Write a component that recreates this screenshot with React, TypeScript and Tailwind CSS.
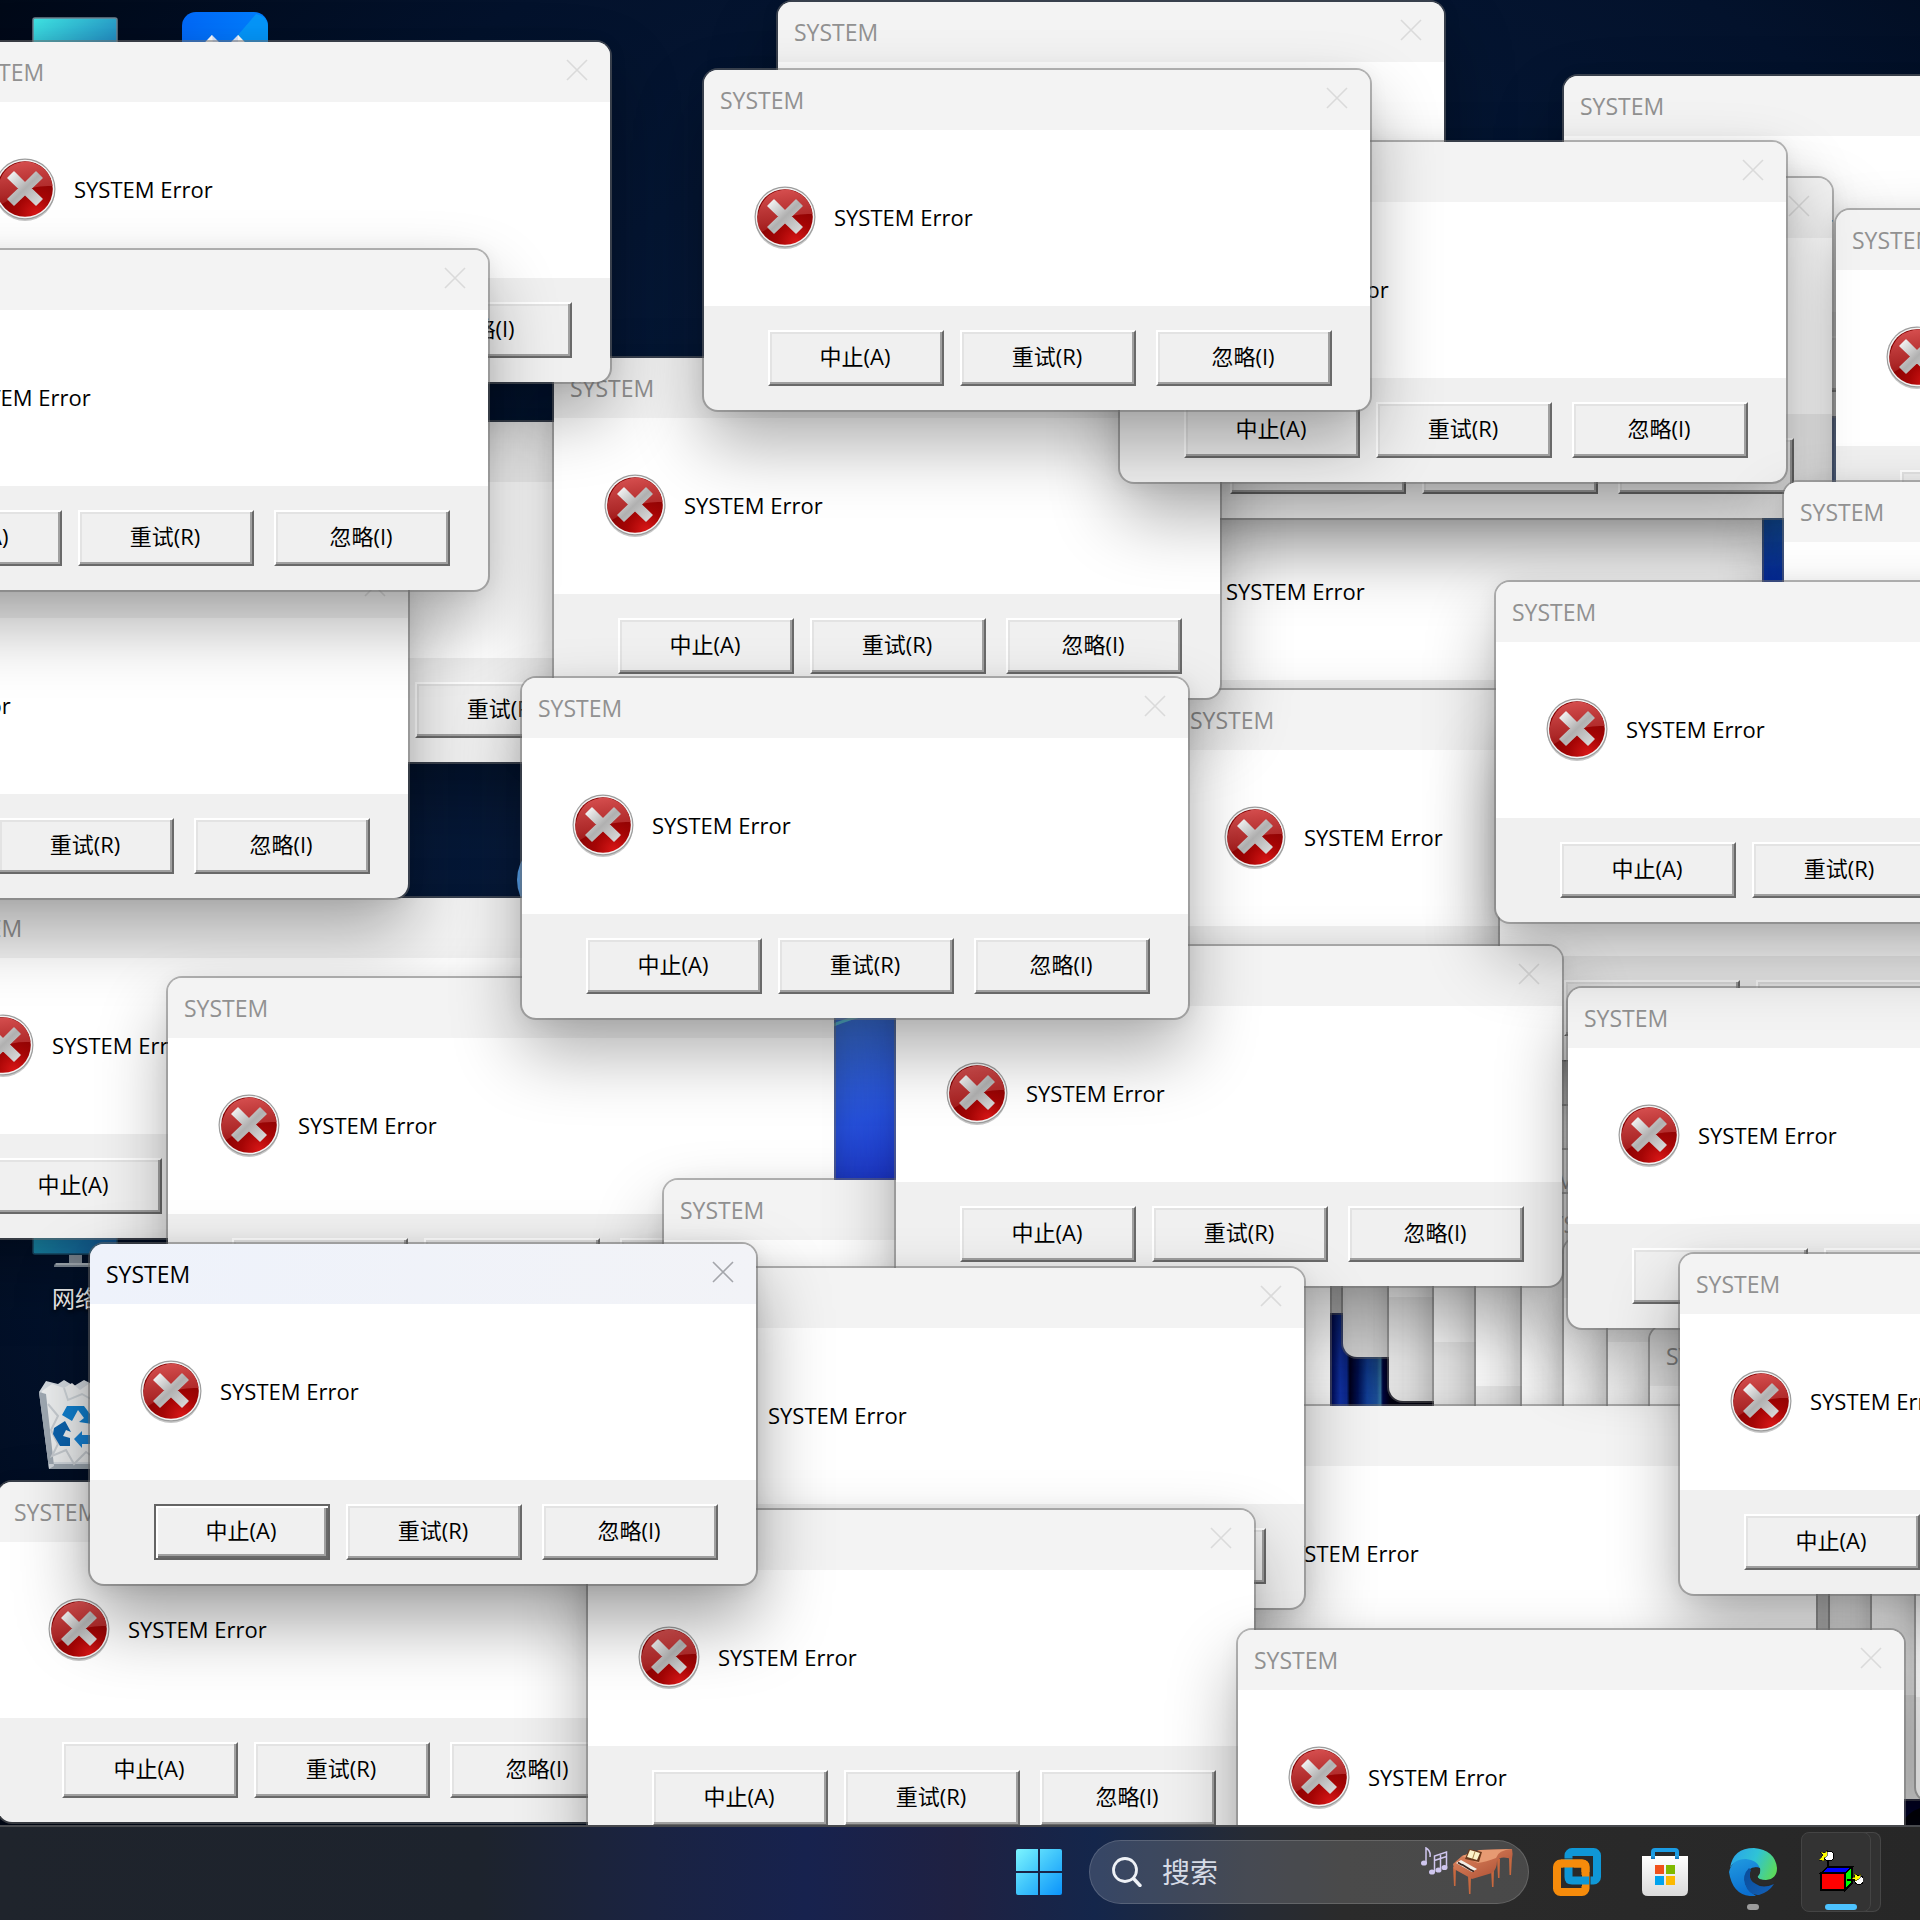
import React from "react";

const FONT = "font-['Open_Sans','Noto_Sans_CJK_SC',sans-serif]";

type Spot = { x: number; y: number };

/* Window positions from back to front; the last one has the focus. */
const WINDOWS: Spot[] = [
  { x: 1298, y: 972 },
  { x: 1342, y: 1016 },
  { x: 1388, y: 1060 },
  { x: 1433, y: 1105 },
  { x: 1475, y: 1149 },
  { x: 1521, y: 1193 },
  { x: 1563, y: 1237 },
  { x: 1607, y: 1281 },
  { x: 1649, y: 1325 },
  { x: 1693, y: 1369 },
  { x: 1739, y: 1413 },
  { x: 1785, y: 1414 },
  { x: 1829, y: 1414 },
  { x: 1871, y: 1458 },
  { x: 1915, y: 1460 },
  { x: 1563, y: 75 },
  { x: 777, y: 1 },
  { x: 1095, y: 443 },
  { x: 1173, y: 689 },
  { x: 1499, y: 719 },
  { x: 158, y: 421 },
  { x: 1165, y: 177 },
  { x: 553, y: 357 },
  { x: 1835, y: 209 },
  { x: 1119, y: 141 },
  { x: 1783, y: 481 },
  { x: -79, y: 897 },
  { x: -259, y: 557 },
  { x: 167, y: 977 },
  { x: 663, y: 1179 },
  { x: 1149, y: 1405 },
  { x: -3, y: 1481 },
  { x: -57, y: 41 },
  { x: -179, y: 249 },
  { x: 703, y: 69 },
  { x: 895, y: 945 },
  { x: 521, y: 677 },
  { x: 1567, y: 987 },
  { x: 1495, y: 581 },
  { x: 637, y: 1267 },
  { x: 1679, y: 1253 },
  { x: 587, y: 1509 },
  { x: 1237, y: 1629 },
  { x: 89, y: 1243 },
];

function ErrorIcon() {
  return (
    <svg viewBox="0 0 62 64" className="h-16 w-[62px] shrink-0" aria-hidden="true">
      <ellipse cx="31" cy="33" rx="30" ry="30" fill="#000" opacity="0.22" />
      <circle cx="31" cy="31" r="30.500" fill="#9c9c9c" />
      <circle cx="31" cy="31" r="29.300" fill="#f4f4f4" />
      <circle cx="31" cy="31" r="27.800" fill="url(#err-red)" />
      <path d="M3.500 35 Q4 43 8 46 Q20 39 27 34 Q40 27 58.500 28 Q56 8 34 3.500 Q8 4 3.500 31Z" fill="url(#err-gloss)" />
      <path
        d="M20 14 L31 25 L42 14 L48 20 L37 30.500 L48 41 L42 47 L31 36.500 L20 47 L14 41 L25 30.500 L14 20Z"
        fill="url(#err-x)"
        stroke="url(#err-x)"
        strokeWidth="1.500"
        strokeLinejoin="round"
      />
    </svg>
  );
}

function SharedGradients() {
  return (
    <svg className="absolute h-0 w-0" aria-hidden="true">
      <defs>
        <radialGradient id="err-red" cx="0.7" cy="0.95" r="0.75">
          <stop offset="0" stopColor="#d81717" />
          <stop offset="0.45" stopColor="#a50505" />
          <stop offset="1" stopColor="#840202" />
        </radialGradient>
        <linearGradient id="err-gloss" x1="0.4" y1="0" x2="0.6" y2="1">
          <stop offset="0" stopColor="#d64f4f" />
          <stop offset="0.7" stopColor="#b43030" stopOpacity="0.85" />
          <stop offset="1" stopColor="#a82020" stopOpacity="0.6" />
        </linearGradient>
        <linearGradient id="err-x" x1="0" y1="0" x2="1" y2="1">
          <stop offset="0" stopColor="#fbfbfb" />
          <stop offset="0.5" stopColor="#b0b0b0" />
          <stop offset="1" stopColor="#dedede" />
        </linearGradient>
      </defs>
    </svg>
  );
}

function PushButton({ label, focused = false }: { label: string; focused?: boolean }) {
  const frame = focused
    ? "border-2 border-[#646464] shadow-[inset_2px_2px_0_#fff,inset_-2px_-2px_0_#696969,inset_-4px_-4px_0_#a0a0a0]"
    : "border-2 border-t-white border-r-[#696969] border-b-[#696969] border-l-white shadow-[inset_-2px_-2px_0_#a0a0a0,inset_2px_2px_0_#e3e3e3]";
  return (
    <button
      type="button"
      className={`flex h-14 w-44 items-center justify-center bg-[#f0f0f0] pr-0.5 pb-1 text-[22px] leading-7 text-black ${frame}`}
    >
      {label}
    </button>
  );
}

function ErrorWindow({ x, y, active }: Spot & { active: boolean }) {
  const shadow = active
    ? "shadow-[0_0_0_2px_rgba(100,100,100,0.5),0_36px_72px_rgba(0,0,0,0.38),0_2px_20px_rgba(0,0,0,0.1)]"
    : "shadow-[0_0_0_2px_rgba(110,110,110,0.5),0_34px_70px_rgba(0,0,0,0.32),0_2px_20px_rgba(0,0,0,0.07)]";
  return (
    <section
      aria-label="SYSTEM"
      className={`absolute m-px w-[666px] overflow-hidden rounded-[14px] bg-[#f0f0f0] ${shadow}`}
      style={{ left: x, top: y }}
    >
      <header
        className={`flex h-[60px] items-center justify-between pr-[22px] pl-4 ${
          active ? "bg-linear-to-r from-[#eef2fb] to-[#f2f3f7] text-black" : "bg-[#f3f3f3] text-[#919191]"
        }`}
      >
        <h2 className="text-[23px] leading-8">SYSTEM</h2>
        <button type="button" aria-label="Close" className={`pb-1 ${active ? "text-[#a4a6ab]" : "text-[#dadada]"}`}>
          <svg viewBox="0 0 22 22" className="size-[22px]" fill="none" stroke="currentColor" strokeWidth="1.600">
            <path d="M1 1 L21 21 M21 1 L1 21" />
          </svg>
        </button>
      </header>
      <div className="flex h-44 items-center gap-[18px] bg-white pl-[50px]">
        <ErrorIcon />
        <p className="pb-0.5 text-[22px] leading-8 text-black">SYSTEM Error</p>
      </div>
      <footer className="flex h-[104px] items-start pt-6 pl-16">
        <PushButton label="中止(A)" focused={active} />
        <div className="ml-4">
          <PushButton label="重试(R)" />
        </div>
        <div className="ml-5">
          <PushButton label="忽略(I)" />
        </div>
      </footer>
    </section>
  );
}

function Wallpaper() {
  return (
    <svg
      className="absolute inset-0 h-full w-full"
      viewBox="0 0 1920 1825"
      preserveAspectRatio="xMidYMid slice"
      aria-hidden="true"
    >
      <defs>
        <radialGradient id="wp-bg" cx="0.58" cy="0.5" r="0.78">
          <stop offset="0" stopColor="#0c2756" />
          <stop offset="0.4" stopColor="#071a3a" />
          <stop offset="0.75" stopColor="#03122c" />
          <stop offset="1" stopColor="#000816" />
        </radialGradient>
        <linearGradient id="wp-strip" gradientUnits="userSpaceOnUse" x1="835" y1="1020" x2="895" y2="1180">
          <stop offset="0" stopColor="#3f78e2" />
          <stop offset="0.6" stopColor="#2b5af4" />
          <stop offset="1" stopColor="#1f3ad8" />
        </linearGradient>
        <linearGradient id="wp-right" gradientUnits="userSpaceOnUse" x1="0" y1="385" x2="0" y2="590">
          <stop offset="0" stopColor="#4566b4" />
          <stop offset="0.45" stopColor="#3560b4" />
          <stop offset="0.65" stopColor="#1c68cc" />
          <stop offset="1" stopColor="#0a38d8" />
        </linearGradient>
        <linearGradient id="wp-fold" gradientUnits="userSpaceOnUse" x1="1330" y1="0" x2="1390" y2="0">
          <stop offset="0" stopColor="#020a66" />
          <stop offset="0.17" stopColor="#1a44d8" />
          <stop offset="0.28" stopColor="#1538b8" />
          <stop offset="0.33" stopColor="#010526" />
          <stop offset="0.46" stopColor="#06186a" />
          <stop offset="0.62" stopColor="#1c56c8" />
          <stop offset="0.78" stopColor="#2a6ccc" />
          <stop offset="0.84" stopColor="#48a0dc" />
          <stop offset="0.88" stopColor="#041060" />
          <stop offset="1" stopColor="#01041c" />
        </linearGradient>
      </defs>
      <rect width="1920" height="1825" fill="url(#wp-bg)" />
      <path d="M760 1060 Q840 990 1000 980 L1200 1000 V1260 H760Z" fill="url(#wp-strip)" />
      <path d="M790 1050 Q822 1026 860 1016" fill="none" stroke="#5fc6e4" strokeWidth="3" />
      <path d="M1700 360 H1850 V620 H1700Z" fill="url(#wp-right)" />
      <path d="M1322 1290 H1450 V1420 H1322Z" fill="url(#wp-fold)" />
      <path d="M1880 1790 H1920 V1825 H1880Z" fill="#010a4a" />
      <path d="M1900 1825 Q1908 1812 1920 1808 V1825Z" fill="#000414" />
    </svg>
  );
}

function DesktopIcons() {
  return (
    <>
      <svg className="absolute top-4 left-8 h-24 w-[86px]" viewBox="0 0 86 96" aria-hidden="true">
        <defs>
          <linearGradient id="pc" x1="0" y1="0" x2="1" y2="1">
            <stop offset="0" stopColor="#3fe6e4" />
            <stop offset="1" stopColor="#1664b4" />
          </linearGradient>
        </defs>
        <rect x="1" y="2" width="84" height="62" rx="2" fill="url(#pc)" stroke="#6d8290" strokeWidth="1.500" />
      </svg>
      <svg className="absolute top-3 left-[182px] size-[86px]" viewBox="0 0 86 86" aria-hidden="true">
        <defs>
          <linearGradient id="app" x1="0" y1="0" x2="1" y2="0.3">
            <stop offset="0" stopColor="#0068f8" />
            <stop offset="1" stopColor="#0080ff" />
          </linearGradient>
        </defs>
        <rect width="86" height="86" rx="14" fill="url(#app)" />
        <path d="M74 2 Q86 4 86 16 V60 L50 30Z" fill="#0596fa" />
        <path d="M12 42 L30 23 L43 36 L56 23 L74 42Z" fill="#dbe8ff" />
        <path d="M30 23 L12 42 H32Z M56 23 V42 H74Z" fill="#fff" />
      </svg>
      <figure className="absolute top-[1188px] left-8 flex w-[86px] flex-col items-center">
        <svg className="h-20 w-[86px]" viewBox="0 0 86 80" aria-hidden="true">
          <defs>
            <linearGradient id="net" x1="0" y1="0" x2="1" y2="0">
              <stop offset="0" stopColor="#1c95b8" />
              <stop offset="1" stopColor="#1766b0" />
            </linearGradient>
          </defs>
          <rect x="1" y="4" width="84" height="62" rx="2" fill="url(#net)" stroke="#1d5270" strokeWidth="1.500" />
          <path d="M37 67 H50 V75 H64 Q66 75 66 79 H22 Q22 75 25 75 H37Z" fill="#8d99a6" />
          <path d="M24 76 H64" stroke="#b9c3cc" strokeWidth="2" />
        </svg>
        <figcaption className="mt-4 text-[23px] leading-7 text-white [text-shadow:0_2px_4px_#000]">网络</figcaption>
      </figure>
      <svg className="absolute top-[1378px] left-[38px] h-[92px] w-[76px]" viewBox="0 0 76 92" aria-hidden="true">
        <path d="M1 14 L8 3 L20 6 L26 2 L36 8 L46 2 L56 7 L66 3 L75 14 L66 91 H11Z" fill="#d5dbe1" />
        <path d="M4 13 L14 6 L26 10 L34 5 L42 12 L52 5 L62 12 L72 12 L64 84 H14Z" fill="#eef0f1" />
        <path d="M1 14 L11 91 L16 88 L8 16Z M11 86 H66 V91 H11Z" fill="#9fa9b3" />
        <path d="M10 26 L20 38 L13 52 L20 66 L14 78 L28 72 L36 86 L48 74 L60 82" fill="none" stroke="#c9ced3" strokeWidth="2" />
        <path d="M26 10 L30 22 L44 16 L58 24" fill="none" stroke="#cfd5da" strokeWidth="2" />
        <path d="M29 28 H46 L52 36 L55 33 L54 46 L41 44 L46 40 L40 32 L34 43 L24 37Z" fill="#1080d0" />
        <path d="M16 50 L27 43 L33 54 L28 52 L25 58 L32 60 V68 H22 L15 56Z" fill="#0b63ae" />
        <path d="M36 61 L44 53 V57 H54 L60 47 L65 54 L58 66 H44 V70Z" fill="#1783d6" />
      </svg>
      <svg className="absolute top-[834px] left-[517px] size-[84px]" viewBox="0 0 84 84" aria-hidden="true">
        <circle cx="42" cy="46" r="42" fill="#5aa4f0" />
      </svg>
    </>
  );
}

function StartLogo() {
  return (
    <svg viewBox="0 0 46 46" className="size-[46px]" aria-hidden="true">
      <defs>
        <linearGradient id="win" gradientUnits="userSpaceOnUse" x1="0" y1="0" x2="46" y2="46">
          <stop offset="0" stopColor="#7cf5ff" />
          <stop offset="0.5" stopColor="#3fc4fb" />
          <stop offset="1" stopColor="#0b93fb" />
        </linearGradient>
      </defs>
      <path d="M0 2 Q0 0 2 0 H22 V22 H0Z M24 0 H44 Q46 0 46 2 V22 H24Z M0 24 H22 V46 H2 Q0 46 0 44Z M24 24 H46 V44 Q46 46 44 46 H24Z" fill="url(#win)" />
    </svg>
  );
}

function PianoArt() {
  return (
    <svg viewBox="0 0 94 50" className="h-[50px] w-[94px]" aria-hidden="true">
      <defs>
        <linearGradient id="piano" x1="0" y1="0" x2="1" y2="1">
          <stop offset="0" stopColor="#e28a62" />
          <stop offset="1" stopColor="#a84a30" />
        </linearGradient>
      </defs>
      <g fill="#cfc6ee">
        <ellipse cx="4" cy="16" rx="3" ry="2.600" />
        <ellipse cx="12" cy="25" rx="3" ry="2.600" />
        <ellipse cx="18.500" cy="23" rx="3" ry="2.600" />
        <ellipse cx="24.500" cy="20.500" rx="3" ry="2.600" />
      </g>
      <path d="M6 16 V1 Q11 4 10 10 M14.500 25 V9 L26.500 5 V20 M14.500 13.500 L26.500 9.500 M20.500 22 V8" fill="none" stroke="#cfc6ee" strokeWidth="1.500" />
      <path d="M33 20 H36 L35.500 39 H34Z M48 29 H51 L50.500 47 H49Z M71 22 H74 L73.500 40 H72Z M77 12 H80 L79.500 31 H78Z M89 10 H92 L91 28 H89.500Z" fill="#c7683f" />
      <path d="M33 17 L42 9 L60 3 L92 2 Q93 6 92 12 Q80 8 77 14 Q77 22 72 26 L52 32 L34 22Z" fill="url(#piano)" />
      <path d="M42 9 L60 3 L92 2 Q78 3 76 11 Q66 15 58 16Z" fill="#e79a72" />
      <path d="M36 16 L52 25 L57 22 L41 13Z" fill="#f3efe8" />
      <path d="M38 15.500 l4 2.400 M42 17.500 l4 2.400 M46 20 l4 2.400 M50 22.500 l4 2" stroke="#3a2620" strokeWidth="1.800" />
      <path d="M45 12 L49 2 L62 5 L59 15Z" fill="#6d3a1d" />
      <path d="M47 10 L50 3 L60 6 L57 13Z" fill="#fdf3c9" />
      <path d="M55 4.500 L52.500 12" stroke="#a9854a" strokeWidth="1" />
    </svg>
  );
}

function SearchBox() {
  return (
    <label className="mr-1 ml-1.5 flex h-16 w-[440px] items-center rounded-full border border-white/15 bg-white/15 pr-3.5 pl-[22px]">
      <svg viewBox="0 0 30 30" className="size-[30px] shrink-0" fill="none" stroke="#eef1f6" strokeLinecap="round" aria-hidden="true">
        <circle cx="13" cy="13" r="11.500" strokeWidth="2.800" />
        <path d="M21.500 21.500 L28 28.500" strokeWidth="3.400" />
      </svg>
      <input
        type="text"
        aria-label="搜索"
        placeholder="搜索"
        className="ml-5 min-w-0 flex-1 bg-transparent text-[28px] leading-10 text-[#d6dbe6] outline-none placeholder:text-[#d6dbe6]"
      />
      <PianoArt />
    </label>
  );
}

function VmIcon() {
  return (
    <svg viewBox="0 0 48 48" className="size-12" fill="none" aria-hidden="true">
      <rect x="15.500" y="4" width="28.500" height="28.500" rx="3.500" stroke="#0f97d6" strokeWidth="8" />
      <rect x="4" y="15.500" width="28.500" height="28.500" rx="3.500" stroke="#2a2a2a" strokeWidth="10" />
      <rect x="4" y="15.500" width="28.500" height="28.500" rx="3.500" stroke="#f68b0b" strokeWidth="8" />
      <path d="M15.500 12 V29 Q15.500 32.500 19 32.500 H29" stroke="#2a2a2a" strokeWidth="11" />
      <path d="M15.500 11 V29 Q15.500 32.500 19 32.500 H36" stroke="#0f97d6" strokeWidth="8" />
      <path d="M8 15.500 H22" stroke="#f68b0b" strokeWidth="8" />
      <path d="M22 15.500 H29 Q32.500 15.500 32.500 19 V24" stroke="#f68b0b" strokeWidth="8" />
    </svg>
  );
}

function StoreIcon() {
  return (
    <svg viewBox="0 0 46 48" className="h-12 w-[46px]" aria-hidden="true">
      <defs>
        <linearGradient id="bag" x1="0" y1="0" x2="0" y2="1">
          <stop offset="0" stopColor="#ffffff" />
          <stop offset="1" stopColor="#dadada" />
        </linearGradient>
        <linearGradient id="handle" x1="0" y1="0" x2="0" y2="1">
          <stop offset="0" stopColor="#27aef0" />
          <stop offset="1" stopColor="#0c6fb8" />
        </linearGradient>
      </defs>
      <path d="M0 8 H46 V42 Q46 48 40 48 H6 Q0 48 0 42Z" fill="url(#bag)" />
      <path d="M11 10 V4 Q11 2 13 2 H33 Q35 2 35 4 V10" fill="none" stroke="#1b9ce4" strokeWidth="4" />
      <path d="M9 7 H13 V11 H9Z M33 7 H37 V11 H33Z" fill="url(#handle)" />
      <path d="M13 17 H22 V26 H13Z" fill="#f1511b" />
      <path d="M24 17 H33 V26 H24Z" fill="#80b900" />
      <path d="M13 28 H22 V37 H13Z" fill="#00a3ee" />
      <path d="M24 28 H33 V37 H24Z" fill="#fcb900" />
    </svg>
  );
}

function EdgeIcon() {
  return (
    <svg viewBox="0 0 48 48" className="size-12" aria-hidden="true">
      <defs>
        <linearGradient id="edge-top" x1="0" y1="0.3" x2="1" y2="0.6">
          <stop offset="0" stopColor="#2aa6e8" />
          <stop offset="0.5" stopColor="#2fc3d6" />
          <stop offset="1" stopColor="#5bd95c" />
        </linearGradient>
        <linearGradient id="edge-left" x1="0" y1="0" x2="0.3" y2="1">
          <stop offset="0" stopColor="#219be0" />
          <stop offset="1" stopColor="#0b6fd0" />
        </linearGradient>
        <linearGradient id="edge-low" x1="0" y1="0" x2="1" y2="0.8">
          <stop offset="0" stopColor="#0a4c9a" />
          <stop offset="1" stopColor="#135fb5" />
        </linearGradient>
      </defs>
      <path d="M1 20 Q4 0 25 0 Q46 2 48 20 Q48 31 37 32 Q29 32 28.500 28.500 Q31.500 26 31 22 Q28 12 16 12 Q4 13 1 20Z" fill="url(#edge-top)" />
      <path d="M0 24 Q3 11 17 11 Q28 12 31 20 Q20 17 16 28 Q14 40 27 48 Q4 50 0 24Z" fill="url(#edge-left)" />
      <path d="M20 20 Q13 27 16 36 Q20 48 30 47 Q40 44 45 36 Q34 41 27 36 Q19 31 22 22Z" fill="url(#edge-low)" />
      <path d="M31 20 Q24 18 21 25 Q20 33 27 36 Q22 30 24 26 Q28 30 29 27 Q32 25 31 20Z" fill="#2a2a2a" />
      <path d="M24 25 Q22 33 29 36 Q36 39 44 35 L46 31 Q40 33 34 32 Q28 31 28.500 28Z" fill="#2a2a2a" />
    </svg>
  );
}

function CubeIcon() {
  return (
    <svg viewBox="0 0 44 44" className="size-11" shapeRendering="crispEdges" aria-hidden="true">
      <path d="M9 8 V20" stroke="#000" strokeWidth="2" />
      <circle cx="10" cy="6" r="5" fill="#fff" stroke="#000" />
      <path d="M0 10 L4 5 L1 2 L6 3 L8 0 L8 6 L5 8 L6 11Z" fill="#ffff00" stroke="#000" strokeWidth="0.500" />
      <path d="M2 23 L9 17 H33 L26 23Z" fill="#0000ff" stroke="#000" strokeWidth="1.500" />
      <path d="M26 23 L33 17 V33 L26 40Z" fill="#00ff00" stroke="#000" strokeWidth="1.500" />
      <rect x="2" y="23" width="24" height="17" fill="#ff0000" stroke="#000" strokeWidth="1.500" />
      <circle cx="40" cy="30" r="4.500" fill="#fff" stroke="#000" />
      <path d="M32 28 L36 27 L35 23 L39 26 L42 24 L41 28 L37 31Z" fill="#ffff00" stroke="#000" strokeWidth="0.500" />
      <path d="M28 30 H36" stroke="#000" strokeWidth="2" />
    </svg>
  );
}

function TaskButton({ label, children }: { label: string; children: React.ReactNode }) {
  return (
    <button type="button" aria-label={label} className="relative flex h-20 w-[88px] items-center justify-center">
      {children}
    </button>
  );
}

function Taskbar() {
  return (
    <nav
      aria-label="Taskbar"
      className="relative flex h-[95px] shrink-0 items-center justify-end border-t-2 border-[#484a4e] bg-[linear-gradient(to_right,#1f242c_0%,#1d232d_25%,#1a2342_34%,#17224e_42%,#1f2142_50%,#14264b_57%,#262b35_65%,#2b2b2b_70%,#272727_100%)] pr-[35px] pb-[3px]"
    >
      <TaskButton label="Start">
        <StartLogo />
      </TaskButton>
      <SearchBox />
      <TaskButton label="VMware Workstation">
        <VmIcon />
      </TaskButton>
      <TaskButton label="Microsoft Store">
        <StoreIcon />
      </TaskButton>
      <TaskButton label="Microsoft Edge">
        <EdgeIcon />
        <span className="absolute bottom-0.5 left-[38px] h-1.5 w-3 rounded-full bg-[#9c9c9c]" />
      </TaskButton>
      <TaskButton label="SYSTEM">
        <span className="absolute inset-y-0 left-3 w-[72px] rounded-lg border border-white/10 bg-white/5" />
        <span className="absolute inset-y-0 left-1 w-[70px] rounded-lg border border-[#444] bg-[#333]" />
        <span className="relative">
          <CubeIcon />
        </span>
        <span className="absolute bottom-0.5 left-7 h-1.5 w-8 rounded-full bg-[#4cc2ff]" />
      </TaskButton>
    </nav>
  );
}

export default function App() {
  return (
    <div className={`flex h-screen flex-col overflow-hidden bg-[#020c1e] ${FONT}`}>
      <SharedGradients />
      <main className="relative flex-1 overflow-hidden">
        <Wallpaper />
        <DesktopIcons />
        {WINDOWS.map((w, i) => (
          <ErrorWindow key={i} x={w.x} y={w.y} active={i === WINDOWS.length - 1} />
        ))}
      </main>
      <Taskbar />
    </div>
  );
}
